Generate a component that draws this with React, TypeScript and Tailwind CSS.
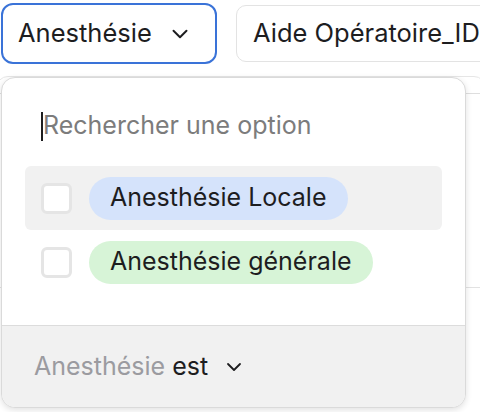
import { ChevronDown } from "lucide-react";

const options = [
  { label: "Anesthésie Locale", pill: "bg-[#d5e3fb]", active: true },
  { label: "Anesthésie générale", pill: "bg-[#d7f4d7]", active: false },
];

export default function App() {
  return (
    <div className="relative w-[480px] h-[412px] overflow-hidden bg-white font-['Inter',sans-serif] text-[#1d1d1f]">
      {/* FILTER BAR */}
      <div className="flex items-start gap-[19px] pl-[1px] pt-[3px]">
        <button className="flex h-[61px] w-[216px] shrink-0 items-center justify-between rounded-[12px] border-2 border-[#3a73d8] pl-[15px] pr-[22px] text-[25.5px]">
          <span>Anesthésie</span>
          <ChevronDown size={26} strokeWidth={1.8} />
        </button>
        <button className="mt-[2px] flex h-[57px] w-[300px] shrink-0 items-center whitespace-nowrap rounded-[10px] border border-[#e3e3e3] pl-[16px] text-[25.5px]">
          Aide Opératoire_ID
        </button>
      </div>

      {/* TABLE BEHIND */}
      <div className="mt-[12px] ml-[-4px] h-[340px] w-[490px] rounded-[12px] border border-[#e6e6e6] bg-white">
        <div className="mt-[16px] border-t border-[#dedede]" />
        <div className="mt-[193px] border-t border-[#e2e2e2]" />
      </div>

      {/* POPOVER */}
      <div className="absolute left-[1px] top-[77px] flex h-[331px] w-[465px] flex-col overflow-hidden rounded-[14px] border border-[#dadada] bg-white shadow-[0_2px_6px_rgba(0,0,0,0.12)]">
        <div className="flex h-[88px] items-center pl-[39px] pt-[8px]">
          <span className="h-[29px] w-[2px] bg-[#1d1d1f]" />
          <span className="text-[25px] text-[#7c7c7c]">Rechercher une option</span>
        </div>

        <div className="px-[23px]">
          {options.map((o) => (
            <div
              key={o.label}
              className={`flex h-[64px] items-center rounded-[6px] pl-[16px] ${
                o.active ? "bg-[#f1f1f1]" : ""
              }`}
            >
              <span className="h-[31px] w-[31px] rounded-[6px] border-[3px] border-[#e5e5e5] bg-white" />
              <span
                className={`ml-[17px] flex h-[43px] items-center rounded-full px-[21px] text-[25px] ${o.pill}`}
              >
                {o.label}
              </span>
            </div>
          ))}
        </div>

        <div className="mt-auto flex h-[82px] items-center border-t border-[#dcdcdc] bg-[#f1f1f1] pl-[32px] text-[25px]">
          <span className="text-[#9b9ba0]">Anesthésie</span>
          <span className="ml-[7px]">est</span>
          <ChevronDown size={24} strokeWidth={1.8} className="ml-[14px]" />
        </div>
      </div>
    </div>
  );
}
